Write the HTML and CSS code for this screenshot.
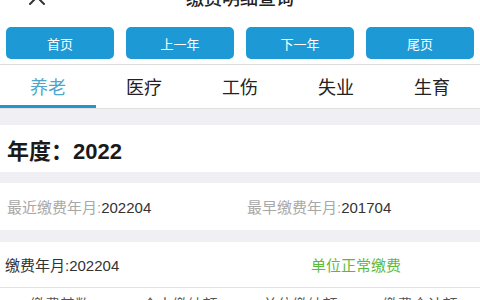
FILE: index.html
```html
<!DOCTYPE html>
<html lang="zh">
<head>
<meta charset="utf-8">
<title>缴费明细查询</title>
<link rel="stylesheet" href="styles.css">
</head>
<body>
<div class="page">
  <header class="header">
    <span class="close">
      <svg width="18" height="18" viewBox="0 0 18 18"><path d="M2 2 L16 16 M16 2 L2 16" stroke="#333" stroke-width="2" fill="none" stroke-linecap="round"/></svg>
    </span>
    <h1 class="title">缴费明细查询</h1>
  </header>
  <nav class="pager">
    <button class="btn">首页</button>
    <button class="btn">上一年</button>
    <button class="btn">下一年</button>
    <button class="btn">尾页</button>
  </nav>
  <div class="tabs">
    <div class="tab active">养老</div>
    <div class="tab">医疗</div>
    <div class="tab">工伤</div>
    <div class="tab">失业</div>
    <div class="tab">生育</div>
  </div>
  <section class="year">年度：2022</section>
  <section class="range">
    <div class="cell"><span class="lbl">最近缴费年月:</span><span class="val">202204</span></div>
    <div class="cell"><span class="lbl">最早缴费年月:</span><span class="val">201704</span></div>
  </section>
  <section class="record">
    <div class="rec-head">
      <div class="cell dark">缴费年月:202204</div>
      <div class="status">单位正常缴费</div>
    </div>
    <div class="cols">
      <div>缴费基数</div>
      <div>个人缴纳额</div>
      <div>单位缴纳额</div>
      <div>缴费合计额</div>
    </div>
  </section>
</div>
</body>
</html>
```
FILE: styles.css
```css
* { box-sizing: border-box; }
html, body { margin: 0; padding: 0; }
body {
  background: #efeff4;
  font-family: "Liberation Sans", "Noto Sans CJK SC", sans-serif;
  color: #222;
  width: 480px;
  height: 300px;
  overflow: hidden;
}
.header {
  height: 44px;
  margin-top: -25px;
  background: #fff;
  display: flex;
  align-items: center;
  justify-content: center;
  position: relative;
}
.close {
  position: absolute;
  left: 28px;
  top: 13px;
  display: flex;
}
.title {
  margin: 0;
  font-size: 18px;
  font-weight: 500;
  color: #222;
}
.pager {
  background: #fff;
  display: grid;
  grid-template-columns: repeat(4, 108px);
  column-gap: 12px;
  padding: 8px 0 5px 6px;
  border-bottom: 1px solid #dcdcdc;
}
.btn {
  height: 32px;
  border: 0;
  border-radius: 5px;
  background: #1d9ad6;
  color: #fff;
  font-family: inherit;
  font-size: 13px;
  padding: 0;
}
.tabs {
  background: #fff;
  display: grid;
  grid-template-columns: repeat(5, 96px);
  height: 44px;
  border-bottom: 1px solid #e0e0e0;
}
.tab {
  display: flex;
  align-items: center;
  justify-content: center;
  font-size: 18px;
  color: #222;
  border-bottom: 3px solid transparent;
  padding-top: 2px;
}
.tab.active {
  color: #4ea6cb;
  border-bottom-color: #2396d0;
}
.year {
  margin-top: 16px;
  background: #fff;
  height: 47px;
  display: flex;
  align-items: center;
  padding-left: 7px;
  font-size: 22px;
  font-weight: bold;
  color: #1a1a1a;
}
.range {
  margin-top: 11px;
  background: #fff;
  height: 47px;
  display: grid;
  grid-template-columns: 240px 240px;
  align-items: center;
}
.cell {
  padding-left: 7px;
  font-size: 15px;
}
.lbl { color: #a8a8a8; }
.val { color: #333; }
.dark { color: #333; padding-left: 5px; }
.record {
  margin-top: 12px;
  background: #fff;
}
.rec-head {
  height: 46px;
  display: grid;
  grid-template-columns: 240px 240px;
  align-items: center;
  border-bottom: 1px solid #e2e2e2;
}
.status {
  text-align: center;
  color: #5cba3f;
  font-size: 15px;
  padding-right: 8px;
}
.cols {
  display: grid;
  grid-template-columns: repeat(4, 120px);
  padding-top: 5px;
  height: 40px;
  font-size: 15px;
  color: #555;
  text-align: center;
}
```
